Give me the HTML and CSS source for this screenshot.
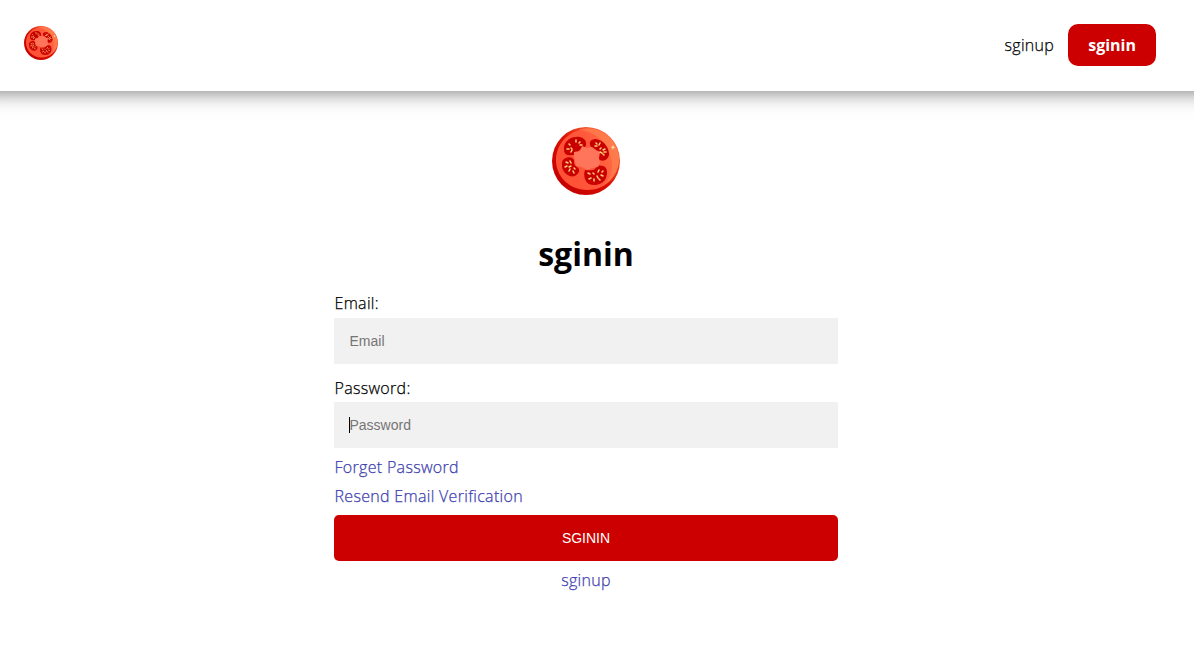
FILE: index.html
```html
<!DOCTYPE html>
<html lang="en">
<head>
<meta charset="utf-8">
<title>sginin</title>
<link rel="stylesheet" href="styles.css">
</head>
<body>
<svg class="defs" width="0" height="0" aria-hidden="true">
  <defs>
    <linearGradient id="rim" x1="0.2" y1="0.9" x2="0.9" y2="0.2">
      <stop offset="0" stop-color="#c40000"/><stop offset="0.5" stop-color="#dc0f02"/><stop offset="1" stop-color="#ff6a3c"/>
    </linearGradient>
    <linearGradient id="flesh" x1="0" y1="0.7" x2="1" y2="0.3">
      <stop offset="0" stop-color="#ff4f35"/><stop offset="0.6" stop-color="#ff593c"/><stop offset="1" stop-color="#ff7448"/>
    </linearGradient>
    <symbol id="tomato" viewBox="0 0 68 68">
      <circle cx="34" cy="34" r="34" fill="url(#rim)"/>
      <path d="M4 31C5 15 19 2 36 2c17 0 31 13 31 29 0 19-14 32-32 32C17 63 3 49 4 31z" fill="url(#flesh)"/>
      <path d="M27 3C46 5 58 18 60 35c1 10-3 18-8 23 10-6 15-16 15-26C66 15 52 1 35 1c-3 0-6 1-8 2z" fill="#ff8652" opacity=".55"/>
      <path d="M12 23c-1-7 5-13 12-13 6-1 11 3 10 8 0 3-3 2-5 4-3 2-5 6-8 6-4 1-9 0-9-5z" fill="#c90000"/>
      <path d="M38 18c-1-4 2-6 6-6 7 1 13 8 13 15 0 5-5 8-9 6-3-1-2-4-3-7-1-3-6-4-7-8z" fill="#c90000"/>
      <path d="M12 32c4-3 9-2 10 1 0 3 0 5 3 7 4 2 2 7-2 9-6 2-13-4-13-10 0-3 0-6 2-7z" fill="#c90000"/>
      <path d="M33 43c4 0 8 1 10-1 2-4 4-4 8-3 5 1 5 9 2 14-4 5-11 6-16 4-4-2-6-9-4-14z" fill="#c90000"/>
      <path d="M22 25l6-1 2-5 5 2 5-1 4 3 4 2-1 6 1 5-2 4-6 1-5 2-5-3-6-1-1-5-1-4z" fill="#ff755c"/>
      <g stroke="#ffd078" stroke-width="1.5" stroke-linecap="round">
        <path d="M17 17l1 1M24 13v2M28 15l-1 1M15 22h2M19 21l1 1M19 25l1-2M30 18h-2"/>
        <path d="M44 16l1 1M48 16l-1 2M43 19h2M49 21l-1 1M53 22l-2 1M54 25h-2M52 28l-1-1M48 25l2 1"/>
        <path d="M14 35l2 1M18 34l1 2M13 40l2-1M17 40l2-1M17 44l1-2M22 46l-1-2M23 42l-1-1"/>
        <path d="M36 46l2 1M41 46l1 1M47 43l-1 2M51 44l-1 1M37 52l2-1M42 54v-2M46 51l-1-2M51 49l-2-1M48 53l-1-1"/>
      </g>
      <path d="M61 18l.7 1.500 1.500.7-1.500.7L61 23l-.7-2.100-1.500-.7 1.500-.7z" fill="#ffe0a8"/>
    </symbol>
  </defs>
</svg>
<header class="header">
  <a class="brand"><svg class="brand-icon"><use href="#tomato"/></svg></a>
  <nav class="nav">
    <a class="nav-link">sginup</a>
    <a class="nav-button">sginin</a>
  </nav>
</header>
<main class="signin">
  <svg class="hero-icon"><use href="#tomato"/></svg>
  <h1 class="title">sginin</h1>
  <form class="form">
    <label class="label" for="email">Email:</label>
    <input class="input" id="email" type="email" placeholder="Email">
    <label class="label label-password" for="password">Password:</label>
    <div class="field">
      <input class="input" id="password" type="password" placeholder="Password">
      <span class="caret"></span>
    </div>
    <a class="link">Forget Password</a>
    <a class="link">Resend Email Verification</a>
    <button class="submit" type="button">SGININ</button>
    <a class="link link-center">sginup</a>
  </form>
</main>
</body>
</html>
```
FILE: styles.css
```css
* { box-sizing: border-box; }
body {
  margin: 0;
  background: #fff;
  color: #000;
  font: 400 16px/22px "Open Sans", sans-serif;
  overflow: hidden;
}
.defs { display: block; }
.header {
  height: 91px;
  padding: 24px 38px 0 24px;
  display: flex;
  justify-content: space-between;
  align-items: flex-start;
  box-shadow: 0 -20px 20px 20px rgba(0, 0, 0, .58);
}
.brand { padding-top: 2px; }
.brand-icon { display: block; width: 34px; height: 34px; }
.nav { display: flex; align-items: center; gap: 14px; }
.nav-link, .label, .link { font-weight: 300; -webkit-text-stroke: .25px currentColor; letter-spacing: .31px; }
.nav-button {
  height: 42px;
  padding: 10px 20px;
  border-radius: 10px;
  background: #c00;
  color: #fff;
  font-weight: 700;
}
.signin {
  width: 504px;
  margin-left: 334px;
  padding-top: 36px;
  display: flex;
  flex-direction: column;
  align-items: center;
}
.hero-icon { display: block; width: 68px; height: 68px; }
.title { margin: 37px 0 0; font-size: 32px; line-height: 44px; font-weight: 700; }
.form { width: 100%; display: flex; flex-direction: column; margin-top: 16px; }
.label { height: 26px; line-height: 22px; padding-left: .5px; }
.label-password { margin-top: 13px; height: 25px; }
.input {
  width: 100%;
  height: 46px;
  padding: 15px 15px 15px 15.5px;
  border: 0;
  outline: 0;
  background: #f1f1f1;
  font: 14px "Liberation Sans", Arial, sans-serif;
}
.input::placeholder { color: #757575; }
.field { position: relative; height: 46px; margin-bottom: 8px; }
.caret { position: absolute; left: 15px; top: 15px; width: 1px; height: 16px; background: #000; }
.link { height: 22px; margin-bottom: 7px; padding-left: .5px; color: #3d41ae; }
.submit {
  height: 46px;
  margin-top: 1px;
  border: 0;
  border-radius: 5px;
  background: #c00;
  color: #fff;
  font: 14px "Liberation Sans", Arial, sans-serif;
}
.link-center { align-self: center; margin: 8px 0 0; padding-left: 0; }
```
